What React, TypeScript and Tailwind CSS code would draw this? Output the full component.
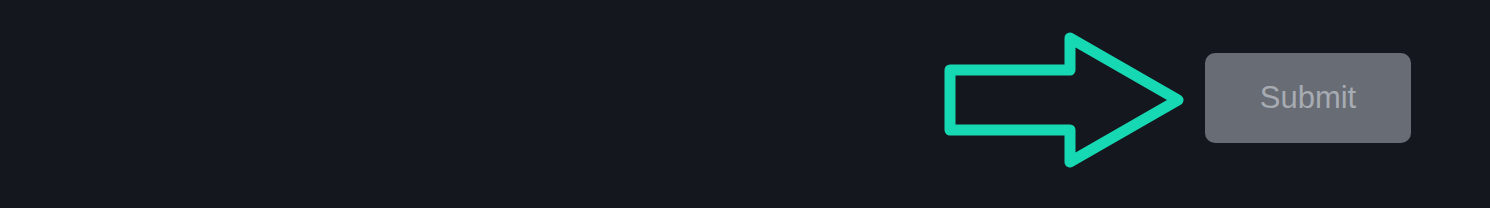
export default function App() {
  return (
    <div className="flex h-[208px] w-full items-start justify-end bg-[#15171e] pr-[79px]">
      {/* arrow pointing at the button */}
      <svg
        width="250"
        height="144"
        viewBox="0 0 250 144"
        className="mt-[28px] shrink-0"
        fill="none"
      >
        <path
          d="M10 42 H130 V10 L238 72 L130 134 V102 H10 Z"
          stroke="#16d9b3"
          strokeWidth="11"
          strokeLinejoin="round"
        />
      </svg>
      <button
        className="ml-[15px] mt-[53px] flex h-[90px] w-[206px] items-center justify-center rounded-[10px] bg-[#686c75] text-[31px] text-[#a7abb2]"
        style={{ fontFamily: '"Liberation Sans", Arial, sans-serif' }}
      >
        Submit
      </button>
    </div>
  );
}
